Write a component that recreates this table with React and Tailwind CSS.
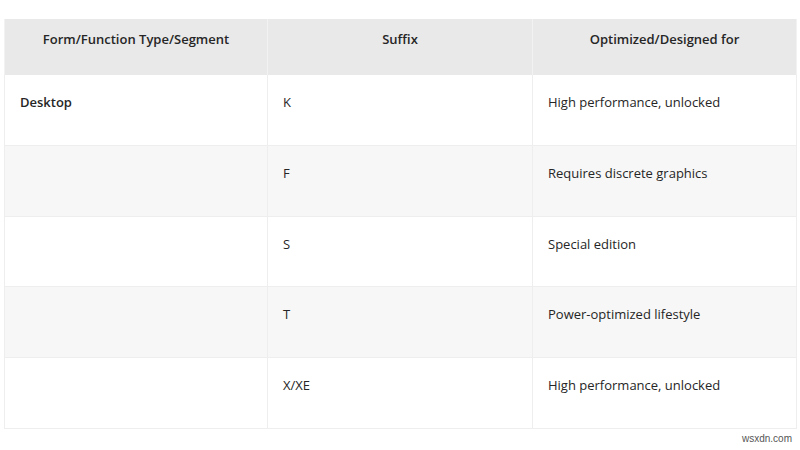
import React from "react";

const rows = [
  { segment: "Desktop", suffix: "K", purpose: "High performance, unlocked", h: "h-[70px]" },
  { segment: "", suffix: "F", purpose: "Requires discrete graphics", h: "h-[71px]" },
  { segment: "", suffix: "S", purpose: "Special edition", h: "h-[70px]" },
  { segment: "", suffix: "T", purpose: "Power-optimized lifestyle", h: "h-[71px]" },
  { segment: "", suffix: "X/XE", purpose: "High performance, unlocked", h: "h-[71px]" },
];

export default function App() {
  return (
    <div className="relative w-[800px] h-[450px] bg-white text-[#262626] font-['Open_Sans',sans-serif] overflow-hidden">
      <div className="pt-[19px] pl-[4px] pr-[3px]">
        <table className="w-full border-collapse table-fixed text-[13px]">
          <colgroup>
            <col className="w-[263px]" />
            <col className="w-[265px]" />
            <col />
          </colgroup>
          <thead>
            <tr className="bg-[#e9e9e9] h-[56px]">
              <th className="border-x border-[#f2f2f2] font-semibold text-center align-top pt-[11px]">Form/Function Type/Segment</th>
              <th className="border-x border-[#f2f2f2] font-semibold text-center align-top pt-[11px]">Suffix</th>
              <th className="border-x border-[#f2f2f2] font-semibold text-center align-top pt-[11px]">Optimized/Designed for</th>
            </tr>
          </thead>
          <tbody>
            {rows.map((r, i) => (
              <tr key={i} className={`${r.h} border-b border-[#eeeeee] ${i % 2 === 1 ? "bg-[#f7f7f7]" : "bg-white"}`}>
                <td className="border-x border-[#eeeeee] align-top pt-[18px] px-[15px] font-semibold">{r.segment}</td>
                <td className="border-x border-[#eeeeee] align-top pt-[18px] px-[15px]">{r.suffix}</td>
                <td className="border-x border-[#eeeeee] align-top pt-[18px] px-[15px]">{r.purpose}</td>
              </tr>
            ))}
          </tbody>
        </table>
      </div>
      <div className="absolute right-[8px] bottom-[4px] text-[10px] text-[#555] font-['Liberation_Sans',sans-serif]">wsxdn.com</div>
    </div>
  );
}
